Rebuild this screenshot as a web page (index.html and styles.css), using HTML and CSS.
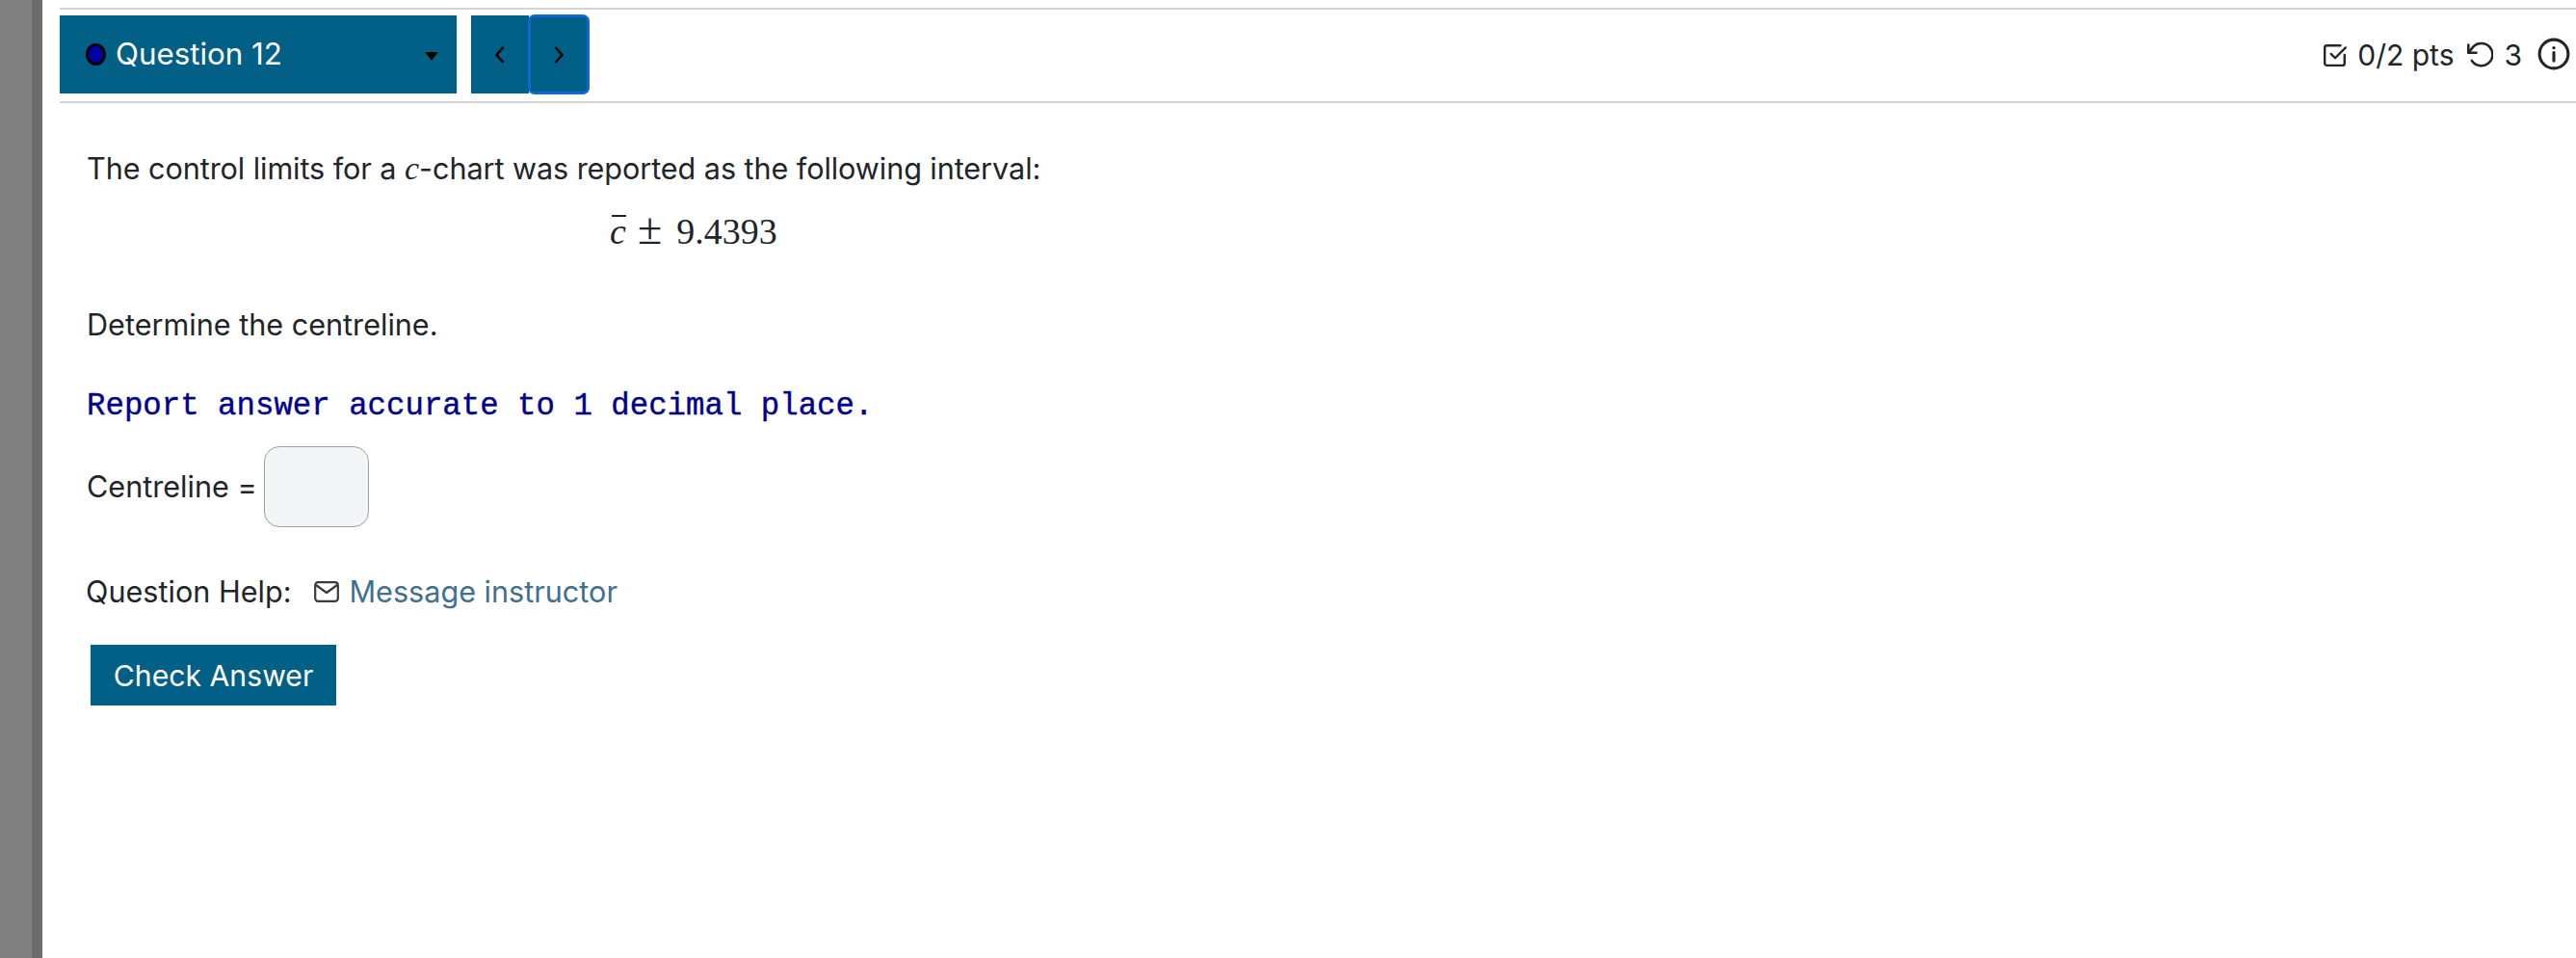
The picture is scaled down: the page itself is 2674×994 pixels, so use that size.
FILE: index.html
```html
<!DOCTYPE html>
<html lang="en">
<head>
<meta charset="utf-8">
<title>Question 12</title>
<link rel="stylesheet" href="styles.css">
</head>
<body>
<div class="page">
  <aside class="side"></aside>
  <main class="main">
    <header class="head">
      <div class="select">
        <span class="dot"></span>
        <span class="select-label">Question 12</span>
        <span class="caret"></span>
      </div>
      <div class="pager">
        <button class="pg prev" type="button"><svg class="chev" viewBox="0 0 10 18"><path d="M8.5 1 1.5 9l7 8"/></svg></button>
        <button class="pg next" type="button"><svg class="chev" viewBox="0 0 10 18"><path d="M1.5 1l7 8-7 8"/></svg></button>
      </div>
      <div class="meta">
        <svg class="ico-check" viewBox="0 0 24 24"><path d="M8 11l4 4 10-10"/><path d="M21 12v8a2 2 0 0 1-2 2H4a2 2 0 0 1-2-2V5a2 2 0 0 1 2-2h13"/></svg>
        <span class="pts">0/2 pts</span>
        <svg class="ico-undo" viewBox="0 0 24 24"><path d="M2 3v7h7"/><path d="M5 17a10 10 0 1 0 1-12L2 10"/></svg>
        <span class="tries">3</span>
        <svg class="ico-info" viewBox="0 0 24 24"><circle cx="12" cy="12" r="10.5"/><path d="M12 11v6"/><circle class="fill" cx="12" cy="7.5" r="1.2"/></svg>
      </div>
    </header>
    <section class="body">
      <p class="t first">The control limits for a <i class="mi">c</i>-chart was reported as the following interval:</p>
      <p class="math"><span class="cbar">c</span><span class="pm">±</span>9.4393</p>
      <p class="t det">Determine the centreline.</p>
      <p class="mono">Report answer accurate to 1 decimal place.</p>
      <div class="ans"><label class="t" for="a">Centreline =</label><input id="a" class="inp" type="text"></div>
      <div class="help">
        <span class="help-l">Question Help:</span>
        <svg class="ico-mail" viewBox="0 0 26 22"><rect x="1.2" y="1.2" width="23.6" height="19.6" rx="3"/><path d="M2 4l11 8 11-8"/></svg>
        <a class="link" href="#">Message instructor</a>
      </div>
      <button class="check" type="button">Check Answer</button>
    </section>
  </main>
</div>
</body>
</html>
```
FILE: styles.css
```css
* { box-sizing: border-box; }
html, body { margin: 0; height: 100%; background: #fff; }
body { font-family: Inter, "Liberation Sans", sans-serif; color: #212529; font-size: 30px; overflow: hidden; }
.page { display: flex; height: 994px; }
.side { width: 44px; flex: none; background: #808080; border-right: 11px solid #6c6c6c; }
.main { flex: 1; padding: 8px 0 0 18px; min-width: 0; }
.head { display: flex; align-items: stretch; padding: 6px 0 8px; border-top: 2px solid #d4d4d4; border-bottom: 2px solid #d4d4d4; box-sizing: content-box; height: 81px; }
.select { width: 412px; background: #025f85; display: flex; align-items: center; padding: 0 19px 0 27px; color: #fff; }
.dot { width: 21px; height: 23px; border-radius: 50%; background: #0000a8; border: 3px solid #000; margin-right: 10px; }
.select-label { flex: 1; line-height: 1; margin-top: 0; font-size: 31.3px; }
.caret { width: 0; height: 0; border-left: 7px solid transparent; border-right: 7px solid transparent; border-top: 9px solid #000; margin-top: 3px; }
.pager { display: flex; margin-left: 15px; }
.pg { width: 60px; height: 81px; padding: 0; border: 0; background: #025f85; display: flex; align-items: center; justify-content: center; }
.next { width: 62px; outline: 3px solid #1166d0; outline-offset: -2px; border-radius: 6px; }
.chev { width: 10px; height: 18px; fill: none; stroke: #000; stroke-width: 2.5; }
.meta { margin-left: auto; display: flex; align-items: center; padding-right: 6px; }
.meta svg { fill: none; stroke: #212529; stroke-width: 2.2; stroke-linecap: round; stroke-linejoin: round; flex: none; }
.ico-check { width: 26px; height: 26px; margin-right: 10px; }
.pts { margin-right: 13px; }
.ico-undo { width: 28px; height: 28px; margin-right: 11px; }
.tries { margin-right: 16px; }
.ico-info { width: 34px; height: 34px; margin-top: -2px; }
.meta .fill { fill: #212529; stroke: none; }
.body { padding-left: 28px; font-size: 30.6px; }
p { margin: 0; }
.t { line-height: 48px; }
.first { margin-top: 44px; letter-spacing: -0.07px; }
.mi { font-family: "Liberation Serif", serif; font-size: 34px; }
.math { margin-top: 17px; padding-left: 543px; line-height: 48px; font-family: "Liberation Serif", serif; font-size: 38px; }
.cbar { font-style: italic; display: inline-block; line-height: 28px; position: relative; }
.cbar::before { content: ""; position: absolute; left: 2px; right: 0; top: -3px; border-top: 2px solid #212529; }
.pm { font-size: 46px; line-height: 40px; margin: 0 15px 0 12px; }
.det { margin-top: 49px; }
.mono { margin-top: 37px; line-height: 48px; font-family: "Liberation Mono", monospace; font-size: 32.4px; color: #00008b; -webkit-text-stroke: 0.4px #00008b; }
.ans { margin-top: 17px; display: flex; align-items: center; }
.inp { width: 109px; height: 84px; margin-left: 7px; background: #f3f4f6; border: 1px solid #a0a0a0; border-radius: 16px; }
.help { margin-top: 43px; margin-left: -1px; display: flex; align-items: center; line-height: 48px; }
.ico-mail { width: 26px; height: 22px; margin-left: 24px; margin-right: 10px; fill: none; stroke: #3a3a3a; stroke-width: 2.2; stroke-linejoin: round; }
.link { color: #41708f; text-decoration: none; }
.check { display: block; margin: 31px 0 0 4px; width: 255px; height: 63px; padding: 0; border: 0; background: #025f85; color: #fff; font: inherit; font-size: 30.2px; }
```
